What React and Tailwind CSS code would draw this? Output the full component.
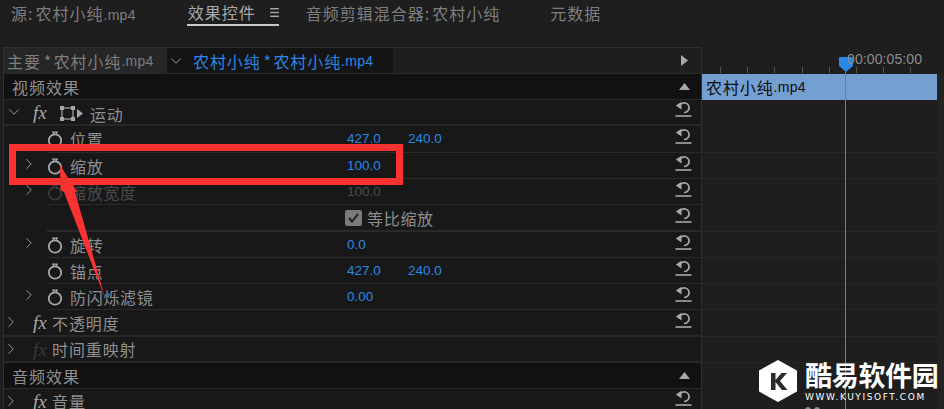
import React from 'react';
import { ChevronDown, ChevronRight, Menu } from 'lucide-react';

const FONT = '"Noto Sans CJK SC", "Liberation Sans", sans-serif';

const Mp4 = () => <span className="font-['Liberation_Sans'] text-[14px] tracking-[0.3px]">.mp4</span>;
const Star = () => <span className="tracking-[-0.6px]"> * </span>;

const Stopwatch = ({ dim }) => (
  <svg width="16" height="18" viewBox="0 0 16 18" fill="none" className={dim ? 'text-[#3a3a3a]' : 'text-[#a8a8a8]'} stroke="currentColor">
    <circle cx="8" cy="10.500" r="6.200" strokeWidth="1.8" />
    <path d="M5 2.200h6M6.200 2.200l0.800 2.300M9.800 2.200L9 4.500" strokeWidth="1.200" />
  </svg>
);

const ResetIcon = () => (
  <svg width="17" height="16" viewBox="0 0 17 16" fill="none" stroke="#a9a9a9" className="block">
    <path d="M6 3.200a4.800 4.800 0 1 1 3 8.300" strokeWidth="1.700" />
    <path d="M0.800 4.500L6.500 0.800V8.500z" fill="#a9a9a9" stroke="none" />
    <path d="M0.500 15h16" strokeWidth="1.600" />
  </svg>
);

const Fx = ({ dim }) => (
  <span className={`font-['Liberation_Serif'] italic text-[19px] leading-none w-[14px] ${dim ? 'text-[#3a3a3a]' : 'text-[#a8a8a8]'}`}>fx</span>
);

const Value = ({ children, dim, className = '' }) => (
  <span className={`text-[13.5px] leading-none font-['Liberation_Sans'] ${dim ? 'text-[#4b4b4b]' : 'text-[#2a88e6]'} ${className}`}>{children}</span>
);

const ResetCell = () => (
  <div className="w-[36px] shrink-0 flex items-center justify-center pb-[6px]">
    <ResetIcon />
  </div>
);

// 属性行
const PropRow = ({ label, twisty, v1, v2, dim, h = 'h-[26px]' }) => (
  <div className={`flex ${h} border-b border-[#2a2a2a] ml-[43px]`}>
    <div className="relative flex items-center flex-1 min-w-0">
      {twisty && (
        <span className="absolute left-[-27px] top-[2px]">
          <ChevronRight size={18} strokeWidth={1.3} color="#9a9a9a" />
        </span>
      )}
      <Stopwatch dim={dim} />
      <span className={`ml-[7px] text-[16px] leading-none tracking-[0.7px] w-[277px] ${dim ? 'text-[#4a4a4a]' : 'text-[#8f8f8f]'}`}>{label}</span>
      <Value dim={dim} className="w-[61px]">{v1}</Value>
      {v2 && <Value dim={dim}>{v2}</Value>}
    </div>
    <ResetCell />
  </div>
);

const EffectRow = ({ label, dim, reset = true, h = 'h-[26px]' }) => (
  <div className={`flex ${h} border-b-2 border-[#272727]`}>
    <div className="relative flex items-center flex-1 pl-[29px]">
      <span className="absolute left-[-2px] top-[3px]">
        <ChevronRight size={18} strokeWidth={1.3} color="#9a9a9a" />
      </span>
      <Fx dim={dim} />
      <span className="ml-[5px] text-[16px] leading-none tracking-[0.9px] text-[#8f8f8f]">{label}</span>
    </div>
    {reset && <ResetCell />}
  </div>
);

const SectionHeader = ({ label }) => (
  <div className="flex items-center justify-between h-[26px] bg-[#111111] border-b border-[#2a2a2a] pl-[8px] pr-[11px]">
    <span className="text-[16px] leading-none tracking-[1px] text-[#8f8f8f]">{label}</span>
    <svg width="11" height="7" viewBox="0 0 11 7"><path d="M5.500 0L11 7H0z" fill="#a8a8a8" /></svg>
  </div>
);

const Ticks = () => (
  <div className="flex h-[6px] mt-[20px] pl-[18px] gap-[26.2px]">
    {[0, 1, 2, 3, 4, 5, 6, 7].map((i) => <span key={i} className="w-px h-full bg-[#555555]" />)}
  </div>
);

export default function App() {
  return (
    <div className="relative w-[944px] h-[409px] overflow-hidden bg-[#1e1e1e]" style={{ fontFamily: FONT }}>
      {/* tabs */}
      <div className="flex h-[47px] text-[16px] leading-none tracking-[1px] text-[#7e7e7e]">
        <span className="ml-[11px] mt-[5px]">源:<span className="ml-[2px]">农村小纯<Mp4 /></span></span>
        <div className="ml-[51px] h-[26px] w-[92px] border-b-2 border-[#c8c8c8] flex items-center gap-[12px] pl-[1px] text-[#a8a8a8]">
          <span className="whitespace-nowrap">效果控件</span>
          <Menu size={13} strokeWidth={2.6} color="#a8a8a8" strokeLinecap="butt" className="shrink-0" />
        </div>
        <span className="ml-[27px] mt-[5px]">音频剪辑混合器:<span className="ml-[2px]">农村小纯</span></span>
        <span className="ml-[50px] mt-[5px]">元数据</span>
      </div>

      <div className="flex h-[362px]">
        {/* left panel */}
        <div className="ml-[3px] w-[699px] border-l border-[#303030] border-t border-r">
          <div className="flex h-[26px] border-b border-[#2a2a2a] text-[16px] leading-none tracking-[0.9px]">
            <div className="w-[163px] flex items-center pl-[3px] text-[#7e7e7e] bg-[#262626] whitespace-pre">主要<Star />农村小纯<Mp4 /></div>
            <div className="relative w-[226px] flex items-center pl-[26px] text-[#2a88e6] bg-[#141414] whitespace-pre">
              <span className="absolute left-0 top-[4px]">
                <ChevronDown size={18} strokeWidth={1.3} color="#9a9a9a" />
              </span>
              农村小纯<Star />农村小纯<Mp4 />
            </div>
            <div className="flex-1 flex items-center justify-end pr-[13px]">
              <svg width="7" height="11" viewBox="0 0 7 11"><path d="M0 0L7 5.500L0 11z" fill="#a8a8a8" /></svg>
            </div>
          </div>

          <div className="bg-[#181818] h-[335px] overflow-hidden">
            <SectionHeader label="视频效果" />

            <div className="flex h-[26px] border-b-2 border-[#272727] relative">
              <div className="relative flex items-center flex-1 pl-[29px]">
                <span className="absolute left-[1px] top-[3px]">
                  <ChevronDown size={18} strokeWidth={1.3} color="#9a9a9a" />
                </span>
                <Fx />
                <svg width="15" height="15" viewBox="0 0 15 15" fill="none" className="ml-[13px] mt-[2px]" stroke="#a8a8a8">
                  <rect x="2" y="2" width="11" height="11" strokeWidth="1.200" />
                  <rect x="0.500" y="0.500" width="3" height="3" fill="#a8a8a8" />
                  <rect x="11.500" y="0.500" width="3" height="3" fill="#a8a8a8" />
                  <rect x="0.500" y="11.500" width="3" height="3" fill="#a8a8a8" />
                  <rect x="11.500" y="11.500" width="3" height="3" fill="#a8a8a8" />
                </svg>
                <svg width="6" height="9" viewBox="0 0 6 9" className="ml-[2px] mr-[7px] mt-[2px]"><path d="M0 0L6 4.500L0 9z" fill="#a8a8a8" /></svg>
                <span className="text-[16px] leading-none tracking-[0.7px] text-[#8f8f8f] mt-[3px]">运动</span>
              </div>
              <ResetCell />
            </div>

            <PropRow label="位置" v1="427.0" v2="240.0" h="h-[27px]" />
            <PropRow label="缩放" twisty v1="100.0" />
            <PropRow label="缩放宽度" twisty dim v1="100.0" />
            <div className="flex h-[27px] border-b-2 border-[#2a2a2a] ml-[43px]">
              <div className="flex items-center flex-1 pl-[298px] gap-[5px]">
                <span className="flex items-center justify-center w-[17px] h-[16px] rounded-[2px] bg-[#7a7a7a]">
                  <svg width="11" height="10" viewBox="0 0 11 10" fill="none"><path d="M1 5l3 3.500L10 1" stroke="#1c1c1c" strokeWidth="2" /></svg>
                </span>
                <span className="text-[16px] leading-none tracking-[0.7px] text-[#8f8f8f]">等比缩放</span>
              </div>
              <ResetCell />
            </div>
            <PropRow label="旋转" twisty v1="0.0" />
            <PropRow label="锚点" v1="427.0" v2="240.0" />
            <PropRow label="防闪烁滤镜" twisty v1="0.00" />
            <EffectRow label="不透明度" h="h-[27px]" />
            <EffectRow label="时间重映射" dim reset={false} />
            <SectionHeader label="音频效果" />
            <EffectRow label="音量" />
          </div>
        </div>

        {/* timeline */}
        <div className="relative w-[235px] h-full">
          <Ticks />
          <div className="h-[26px] mt-[1px] bg-[#739fd1] flex items-center pl-[4px] text-[16px] leading-none tracking-[0.9px] text-[#0d0d0d]">
            农村小纯<Mp4 />
          </div>
          <div className="h-[53px] border-b border-[#262626]" />
          <div className="h-[26px] border-b border-[#262626]" />
          <div className="h-[53px] border-b border-[#262626]" />
          <div className="h-[26px] border-b border-[#262626]" />
          <div className="h-[26px] border-b border-[#262626]" />
          <div className="h-[26px] border-b border-[#262626]" />
          <div className="h-[27px] border-b border-[#262626]" />
          <div className="h-[26px] border-b border-[#262626]" />
        </div>
        <div className="flex-1 mt-[27px] bg-[#232323] rounded-tl-[4px]" />
      </div>

      {/* playhead & timecode */}
      <div className="absolute left-[845px] top-[72px] bottom-0 w-px bg-[#3a8ee0]" />
      <svg width="14" height="15" viewBox="0 0 14 15" className="absolute left-[839px] top-[57px]">
        <path d="M1 0h12a1 1 0 0 1 1 1v8l-7 6-7-6V1a1 1 0 0 1 1-1z" fill="#2a88e6" />
      </svg>
      <span className="absolute left-[847px] top-[51px] text-[14px] leading-[16px] tracking-[0.1px] text-[#8d8d8d] font-['Liberation_Sans']">00:00:05:00</span>

      {/* red annotation */}
      <div className="absolute left-[9px] top-[144px] w-[394px] h-[41px] border-[7px] border-[#fb3232]" />
      <svg width="120" height="160" viewBox="0 0 120 160" className="absolute left-0 top-[150px]">
        <path d="M60 15L77 42L75 42L105 148L64 42L60.500 40z" fill="#fb3232" />
      </svg>

      {/* watermark */}
      <div className="absolute left-[759px] top-[360px] flex items-start gap-[8px]">
        <svg width="38" height="42" viewBox="0 0 38 42">
          <path d="M19 1L37 11V31L19 41L1 31V11z" fill="#ffffff" stroke="#ffffff" strokeWidth="2" strokeLinejoin="round" />
          <path d="M12 13h4.500v7l6-7H28l-7 8 7.500 9H23l-6.500-8v8H12z" fill="#2b2b2b" />
        </svg>
        <div className="flex flex-col text-white">
          <span className="text-[27px] font-bold leading-[28px] tracking-[-0.3px] mt-[1px]">酷易软件园</span>
          <span className="text-[9px] font-['DejaVu_Sans'] leading-[10px] tracking-[1.6px] mt-[3px]">WWW.KUYISOFT.COM</span>
        </div>
      </div>
      <span className="absolute left-[805px] top-[407px] w-[6px] h-[6px] rounded-full bg-[#8a8a8a]" />
      <span className="absolute left-[814px] top-[407px] w-[6px] h-[6px] rounded-full bg-[#8a8a8a]" />
    </div>
  );
}
